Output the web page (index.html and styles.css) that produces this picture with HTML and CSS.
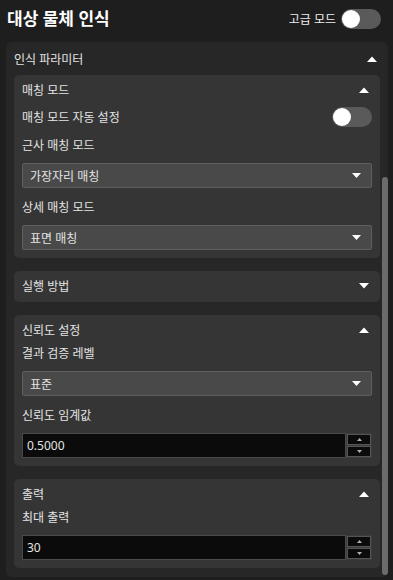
FILE: index.html
```html
<!DOCTYPE html>
<html lang="ko">
<head>
<meta charset="UTF-8" />
<title>대상 물체 인식</title>
<link rel="stylesheet" href="styles.css">
</head>
<body>

<div class="topbar">
  <h1 class="title">대상 물체 인식</h1>
  <div class="adv">
    <span>고급 모드</span>
    <span class="toggle"><span class="knob"></span></span>
  </div>
</div>

<div class="panel">
  <div class="panel-head">
    <span>인식 파라미터</span>
    <svg class="caret" width="10" height="6" viewBox="0 0 10 6"><path d="M0 6 L5 0.5 L10 6 Z" fill="#fff"/></svg>
  </div>
  <div class="panel-body">
    <div class="cards">

      <div class="card">
        <div class="card-head">
          <span>매칭 모드</span>
          <svg class="caret" width="10" height="6" viewBox="0 0 10 6"><path d="M0 6 L5 0.5 L10 6 Z" fill="#fff"/></svg>
        </div>
        <div class="switch-row">
          <span>매칭 모드 자동 설정</span>
          <span class="toggle"><span class="knob"></span></span>
        </div>
        <div class="field first">
          <div class="label">근사 매칭 모드</div>
          <div class="select">
            <span>가장자리 매칭</span>
            <svg width="9" height="5" viewBox="0 0 9 5"><path d="M0 0 L9 0 L4.5 5 Z" fill="#fff"/></svg>
          </div>
        </div>
        <div class="field">
          <div class="label">상세 매칭 모드</div>
          <div class="select">
            <span>표면 매칭</span>
            <svg width="9" height="5" viewBox="0 0 9 5"><path d="M0 0 L9 0 L4.5 5 Z" fill="#fff"/></svg>
          </div>
        </div>
      </div>

      <div class="card collapsed">
        <div class="card-head">
          <span>실행 방법</span>
          <svg class="caret" width="10" height="6" viewBox="0 0 10 6"><path d="M0 0 L10 0 L5 5.5 Z" fill="#fff"/></svg>
        </div>
      </div>

      <div class="card">
        <div class="card-head">
          <span>신뢰도 설정</span>
          <svg class="caret" width="10" height="6" viewBox="0 0 10 6"><path d="M0 6 L5 0.5 L10 6 Z" fill="#fff"/></svg>
        </div>
        <div class="field top">
          <div class="label">결과 검증 레벨</div>
          <div class="select">
            <span>표준</span>
            <svg width="9" height="5" viewBox="0 0 9 5"><path d="M0 0 L9 0 L4.5 5 Z" fill="#fff"/></svg>
          </div>
        </div>
        <div class="field">
          <div class="label">신뢰도 임계값</div>
          <div class="spin">
            <div class="spin-value">0.5000</div>
            <div class="spin-btns">
              <div class="spin-btn"><svg width="5" height="3" viewBox="0 0 5 3"><path d="M0 3 L2.5 0 L5 3 Z" fill="#b0b0b0"/></svg></div>
              <div class="spin-btn"><svg width="5" height="3" viewBox="0 0 5 3"><path d="M0 0 L5 0 L2.5 3 Z" fill="#b0b0b0"/></svg></div>
            </div>
          </div>
        </div>
      </div>

      <div class="card">
        <div class="card-head">
          <span>출력</span>
          <svg class="caret" width="10" height="6" viewBox="0 0 10 6"><path d="M0 6 L5 0.5 L10 6 Z" fill="#fff"/></svg>
        </div>
        <div class="field top">
          <div class="label">최대 출력</div>
          <div class="spin">
            <div class="spin-value">30</div>
            <div class="spin-btns">
              <div class="spin-btn"><svg width="5" height="3" viewBox="0 0 5 3"><path d="M0 3 L2.5 0 L5 3 Z" fill="#b0b0b0"/></svg></div>
              <div class="spin-btn"><svg width="5" height="3" viewBox="0 0 5 3"><path d="M0 0 L5 0 L2.5 3 Z" fill="#b0b0b0"/></svg></div>
            </div>
          </div>
        </div>
      </div>

    </div>
    <div class="scroll"><div class="thumb"></div></div>
  </div>
</div>

</body>
</html>
```

FILE: styles.css
```css
html, body { margin: 0; height: 580px; overflow: hidden; }
body { background: #1e1e1e; color: #e4e4e4; font-family: "Noto Sans", "Noto Sans CJK KR", sans-serif; font-size: 12px; padding: 0 5px 0 6px; }

.topbar { height: 38px; display: flex; align-items: center; justify-content: space-between; padding: 0 7px 0 1px; }
.title { margin: 0; font-size: 17px; font-weight: bold; color: #fff; line-height: 20px; }
.adv { display: flex; align-items: center; gap: 5px; color: #eee; }

.toggle { width: 40px; height: 20px; border-radius: 10px; background: #5a5a5a; display: flex; align-items: center; padding: 0 1px; box-sizing: border-box; }
.knob { width: 18px; height: 18px; border-radius: 50%; background: #fff; }

.panel { margin-top: 4px; background: #272727; border-radius: 6px; }
.panel-head { height: 33px; display: flex; align-items: center; justify-content: space-between; padding: 0 11px 0 8px; }
.panel-body { display: flex; }
.cards { flex: 1; display: flex; flex-direction: column; gap: 13px; padding: 0 0 9px 8px; }
.scroll { width: 6px; margin-left: 2px; display: flex; flex-direction: column; }
.thumb { flex: 1; margin: 102px 0 2px; background: #6b6b6b; border-radius: 3px; }

.card { background: #353535; border-radius: 5px; padding: 0 8px 8px; }
.card.collapsed { padding-bottom: 1px; }
.card-head { height: 30px; display: flex; align-items: center; justify-content: space-between; padding-right: 3px; }
.caret { display: block; }

.switch-row { height: 20px; margin-top: 2px; display: flex; align-items: center; justify-content: space-between; }

.field { margin-top: 11px; }
.field.first { margin-top: 10px; }
.field.top { margin-top: 0; }
.label { line-height: 18px; margin-bottom: 8px; }

.select { height: 25px; box-sizing: border-box; background: #494949; border: 1px solid #5e5e5e; border-radius: 2px; display: flex; align-items: center; justify-content: space-between; padding: 0 10px 0 7px; }
.select svg { display: block; }

.spin { height: 25px; display: flex; }
.spin-value { flex: 1; background: #0b0b0b; border: 1px solid #4a4a4a; display: flex; align-items: center; padding-left: 4px; }
.spin-btns { width: 26px; box-sizing: border-box; background: #3c3c3c; padding: 1px; display: flex; flex-direction: column; gap: 1px; }
.spin-btn { flex: 1; background: #0b0b0b; border: 1px solid #555; display: flex; align-items: center; justify-content: center; }
.spin-btn svg { display: block; }
```
